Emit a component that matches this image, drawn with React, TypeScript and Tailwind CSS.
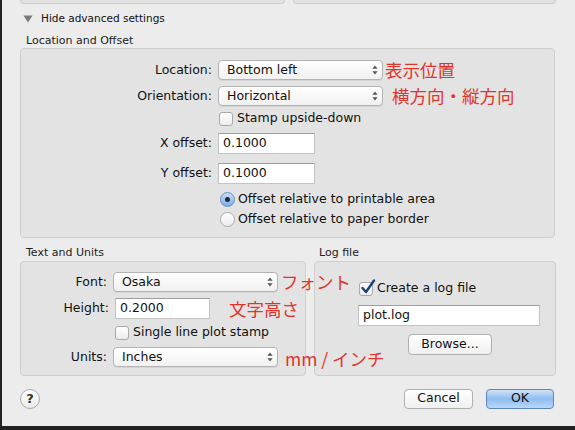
import React from "react";

const font = { fontFamily: '"DejaVu Sans", "Liberation Sans", sans-serif' };
const jp = { fontFamily: '"Noto Sans CJK JP", sans-serif' };

function Arrows() {
  return (
    <svg width="6" height="10" viewBox="0 0 6 10" className="shrink-0">
      <path d="M3 0.5 L5.6 3.8 L0.4 3.8 Z" fill="#555" />
      <path d="M3 9.5 L5.6 6.2 L0.4 6.2 Z" fill="#555" />
    </svg>
  );
}

function Popup({ value, w }: { value: string; w: string }) {
  return (
    <div
      className={`${w} shrink-0 h-[20px] rounded-[4px] border border-[#b3b3b3] bg-gradient-to-b from-[#ffffff] to-[#f1f1f1] shadow-[0_1px_0_rgba(0,0,0,0.06)] flex items-center pl-[8px] pr-[4px] text-[12.5px] text-[#111]`}
    >
      <span className="flex-1 leading-none">{value}</span>
      <Arrows />
    </div>
  );
}

function Field({ value, w }: { value: string; w: string }) {
  return (
    <div
      className={`${w} shrink-0 h-[21px] bg-white border border-[#c3c3c3] border-t-[#9e9e9e] flex items-center pl-[4px] text-[12.5px] text-[#111]`}
    >
      {value}
    </div>
  );
}

function Check({ checked }: { checked?: boolean }) {
  return (
    <div className="relative w-[14px] h-[14px] rounded-[3px] border border-[#a9a9a9] bg-gradient-to-b from-[#ffffff] to-[#ececec] shrink-0">
      {checked && (
        <svg width="16" height="16" viewBox="0 0 16 16" className="absolute left-[0px] top-[-4px]">
          <path d="M2.5 9 L6 13 L14 1.5" stroke="#1f3f7a" strokeWidth="2.4" fill="none" strokeLinecap="round" strokeLinejoin="round" />
        </svg>
      )}
    </div>
  );
}

function Radio({ on }: { on?: boolean }) {
  return on ? (
    <div className="w-[15px] h-[15px] rounded-full border border-[#6a8fbf] bg-gradient-to-b from-[#c9def6] to-[#7eaee6] flex items-center justify-center shrink-0">
      <div className="w-[5px] h-[5px] rounded-full bg-[#1b2a3e]" />
    </div>
  ) : (
    <div className="w-[15px] h-[15px] rounded-full border border-[#a9a9a9] bg-gradient-to-b from-[#ffffff] to-[#ececec] shrink-0" />
  );
}

function Label({ children, w }: { children: React.ReactNode; w: string }) {
  return <div className={`${w} shrink-0 text-right text-[12.5px] text-[#111] pr-[6px]`}>{children}</div>;
}

function Red({ children, cls }: { children: React.ReactNode; cls: string }) {
  return (
    <span style={jp} className={`${cls} relative z-10 shrink-0 whitespace-nowrap text-[17.5px] leading-none text-[#e0342b]`}>
      {children}
    </span>
  );
}

export default function App() {
  return (
    <div style={font} className="w-[575px] h-[430px] bg-[#222] overflow-hidden flex flex-col">
      <div className="flex-1 ml-[2px] mb-[4px] bg-[#ececec] flex flex-col text-[#111]">
        {/* top remnants */}
        <div className="flex h-[4px] overflow-hidden">
          <div className="ml-[18px] w-[265px] h-[4px] border-x border-b border-[#cdcdcd] rounded-b-[4px] bg-[#e3e3e3]" />
          <div className="ml-[8px] w-[263px] h-[4px] border-x border-b border-[#cdcdcd] rounded-b-[4px] bg-[#e3e3e3]" />
        </div>

        {/* disclosure */}
        <div className="flex items-center h-[20px] mt-[5px]">
          <svg width="10" height="8" viewBox="0 0 10 8" className="ml-[21px] shrink-0">
            <path d="M0.5 0.5 L9.5 0.5 L5 7.5 Z" fill="#7a7a7a" />
          </svg>
          <span className="ml-[8px] text-[10.5px]">Hide advanced settings</span>
        </div>

        <div className="ml-[24px] mt-[5px] h-[14px] text-[11px] leading-[14px] text-[#222]">Location and Offset</div>

        {/* Location box */}
        <div className="ml-[18px] mt-[0px] w-[535px] h-[190px] rounded-[4px] border border-[#cfcfcf] bg-[#e3e3e3] flex flex-col">
          <div className="flex items-center mt-[11px] h-[20px]">
            <Label w="w-[197px]">Location:</Label>
            <Popup value="Bottom left" w="w-[165px]" />
            <Red cls="ml-[2px]">表示位置</Red>
          </div>
          <div className="flex items-center mt-[6px] h-[20px]">
            <Label w="w-[197px]">Orientation:</Label>
            <Popup value="Horizontal" w="w-[165px]" />
            <Red cls="ml-[9px]">横方向・縦方向</Red>
          </div>
          <div className="flex items-center mt-[5px] h-[15px]">
            <div className="w-[198px] shrink-0" />
            <Check />
            <span className="ml-[4px] text-[12.5px]">Stamp upside-down</span>
          </div>
          <div className="flex items-center mt-[7px] h-[21px]">
            <Label w="w-[197px]">X offset:</Label>
            <Field value="0.1000" w="w-[97px]" />
          </div>
          <div className="flex items-center mt-[9px] h-[21px]">
            <Label w="w-[197px]">Y offset:</Label>
            <Field value="0.1000" w="w-[97px]" />
          </div>
          <div className="flex items-center mt-[7px] h-[16px]">
            <div className="w-[199px] shrink-0" />
            <Radio on />
            <span className="ml-[3px] text-[12.5px]">Offset relative to printable area</span>
          </div>
          <div className="flex items-center mt-[4px] h-[16px]">
            <div className="w-[199px] shrink-0" />
            <Radio />
            <span className="ml-[3px] text-[12.5px]">Offset relative to paper border</span>
          </div>
        </div>

        {/* group labels */}
        <div className="flex mt-[8px] h-[14px] text-[11px] leading-[14px] text-[#222]">
          <div className="ml-[24px] w-[293px]">Text and Units</div>
          <div>Log file</div>
        </div>

        <div className="flex mt-[1px]">
          {/* Text and units */}
          <div className="relative z-10 ml-[18px] w-[286px] shrink-0 h-[115px] rounded-[4px] border border-[#cfcfcf] bg-[#e3e3e3] flex flex-col">
            <div className="flex items-center mt-[10px] h-[20px]">
              <Label w="w-[92px]">Font:</Label>
              <Popup value="Osaka" w="w-[165px]" />
              <Red cls="ml-[3px]">フォント</Red>
            </div>
            <div className="flex items-center mt-[6px] h-[21px]">
              <Label w="w-[94px]">Height:</Label>
              <Field value="0.2000" w="w-[95px]" />
              <Red cls="ml-[19px]">文字高さ</Red>
            </div>
            <div className="flex items-center mt-[6px] h-[15px]">
              <div className="w-[94px] shrink-0" />
              <Check />
              <span className="ml-[4px] text-[12.5px] whitespace-nowrap">Single line plot stamp</span>
            </div>
            <div className="flex items-center mt-[7px] h-[20px]">
              <Label w="w-[92px]">Units:</Label>
              <Popup value="Inches" w="w-[165px]" />
              <Red cls="ml-[7px] mt-[4px]">mm / インチ</Red>
            </div>
          </div>

          {/* Log file */}
          <div className="ml-[8px] w-[242px] shrink-0 h-[115px] rounded-[4px] border border-[#cfcfcf] bg-[#e3e3e3] flex flex-col">
            <div className="flex items-center mt-[19px] h-[15px]">
              <div className="w-[44px] shrink-0" />
              <Check checked />
              <span className="ml-[4px] text-[12.5px]">Create a log file</span>
            </div>
            <div className="flex mt-[9px] ml-[43px]">
              <Field value="plot.log" w="w-[182px]" />
            </div>
            <div className="flex mt-[8px] ml-[93px]">
              <div className="w-[84px] h-[21px] rounded-[4px] border border-[#b0b0b0] bg-gradient-to-b from-[#ffffff] to-[#f0f0f0] flex items-center justify-center text-[12.5px]">
                Browse...
              </div>
            </div>
          </div>
        </div>

        {/* footer */}
        <div className="flex items-center mt-[12px] h-[21px]">
          <div className="ml-[18px] w-[20px] h-[20px] shrink-0 rounded-full border border-[#a9a9a9] bg-gradient-to-b from-[#ffffff] to-[#eaeaea] flex items-center justify-center text-[13px] font-bold text-[#333]">
            ?
          </div>
          <div className="ml-[364px] w-[69px] h-[20px] shrink-0 rounded-[4px] border border-[#b0b0b0] bg-gradient-to-b from-[#ffffff] to-[#f0f0f0] flex items-center justify-center text-[12.5px]">
            Cancel
          </div>
          <div className="ml-[13px] w-[68px] h-[20px] shrink-0 rounded-[4px] border border-[#5d86b8] bg-gradient-to-b from-[#cfe2f8] via-[#8fbdf0] to-[#b9d8f8] flex items-center justify-center text-[12.5px]">
            OK
          </div>
        </div>
      </div>
    </div>
  );
}
